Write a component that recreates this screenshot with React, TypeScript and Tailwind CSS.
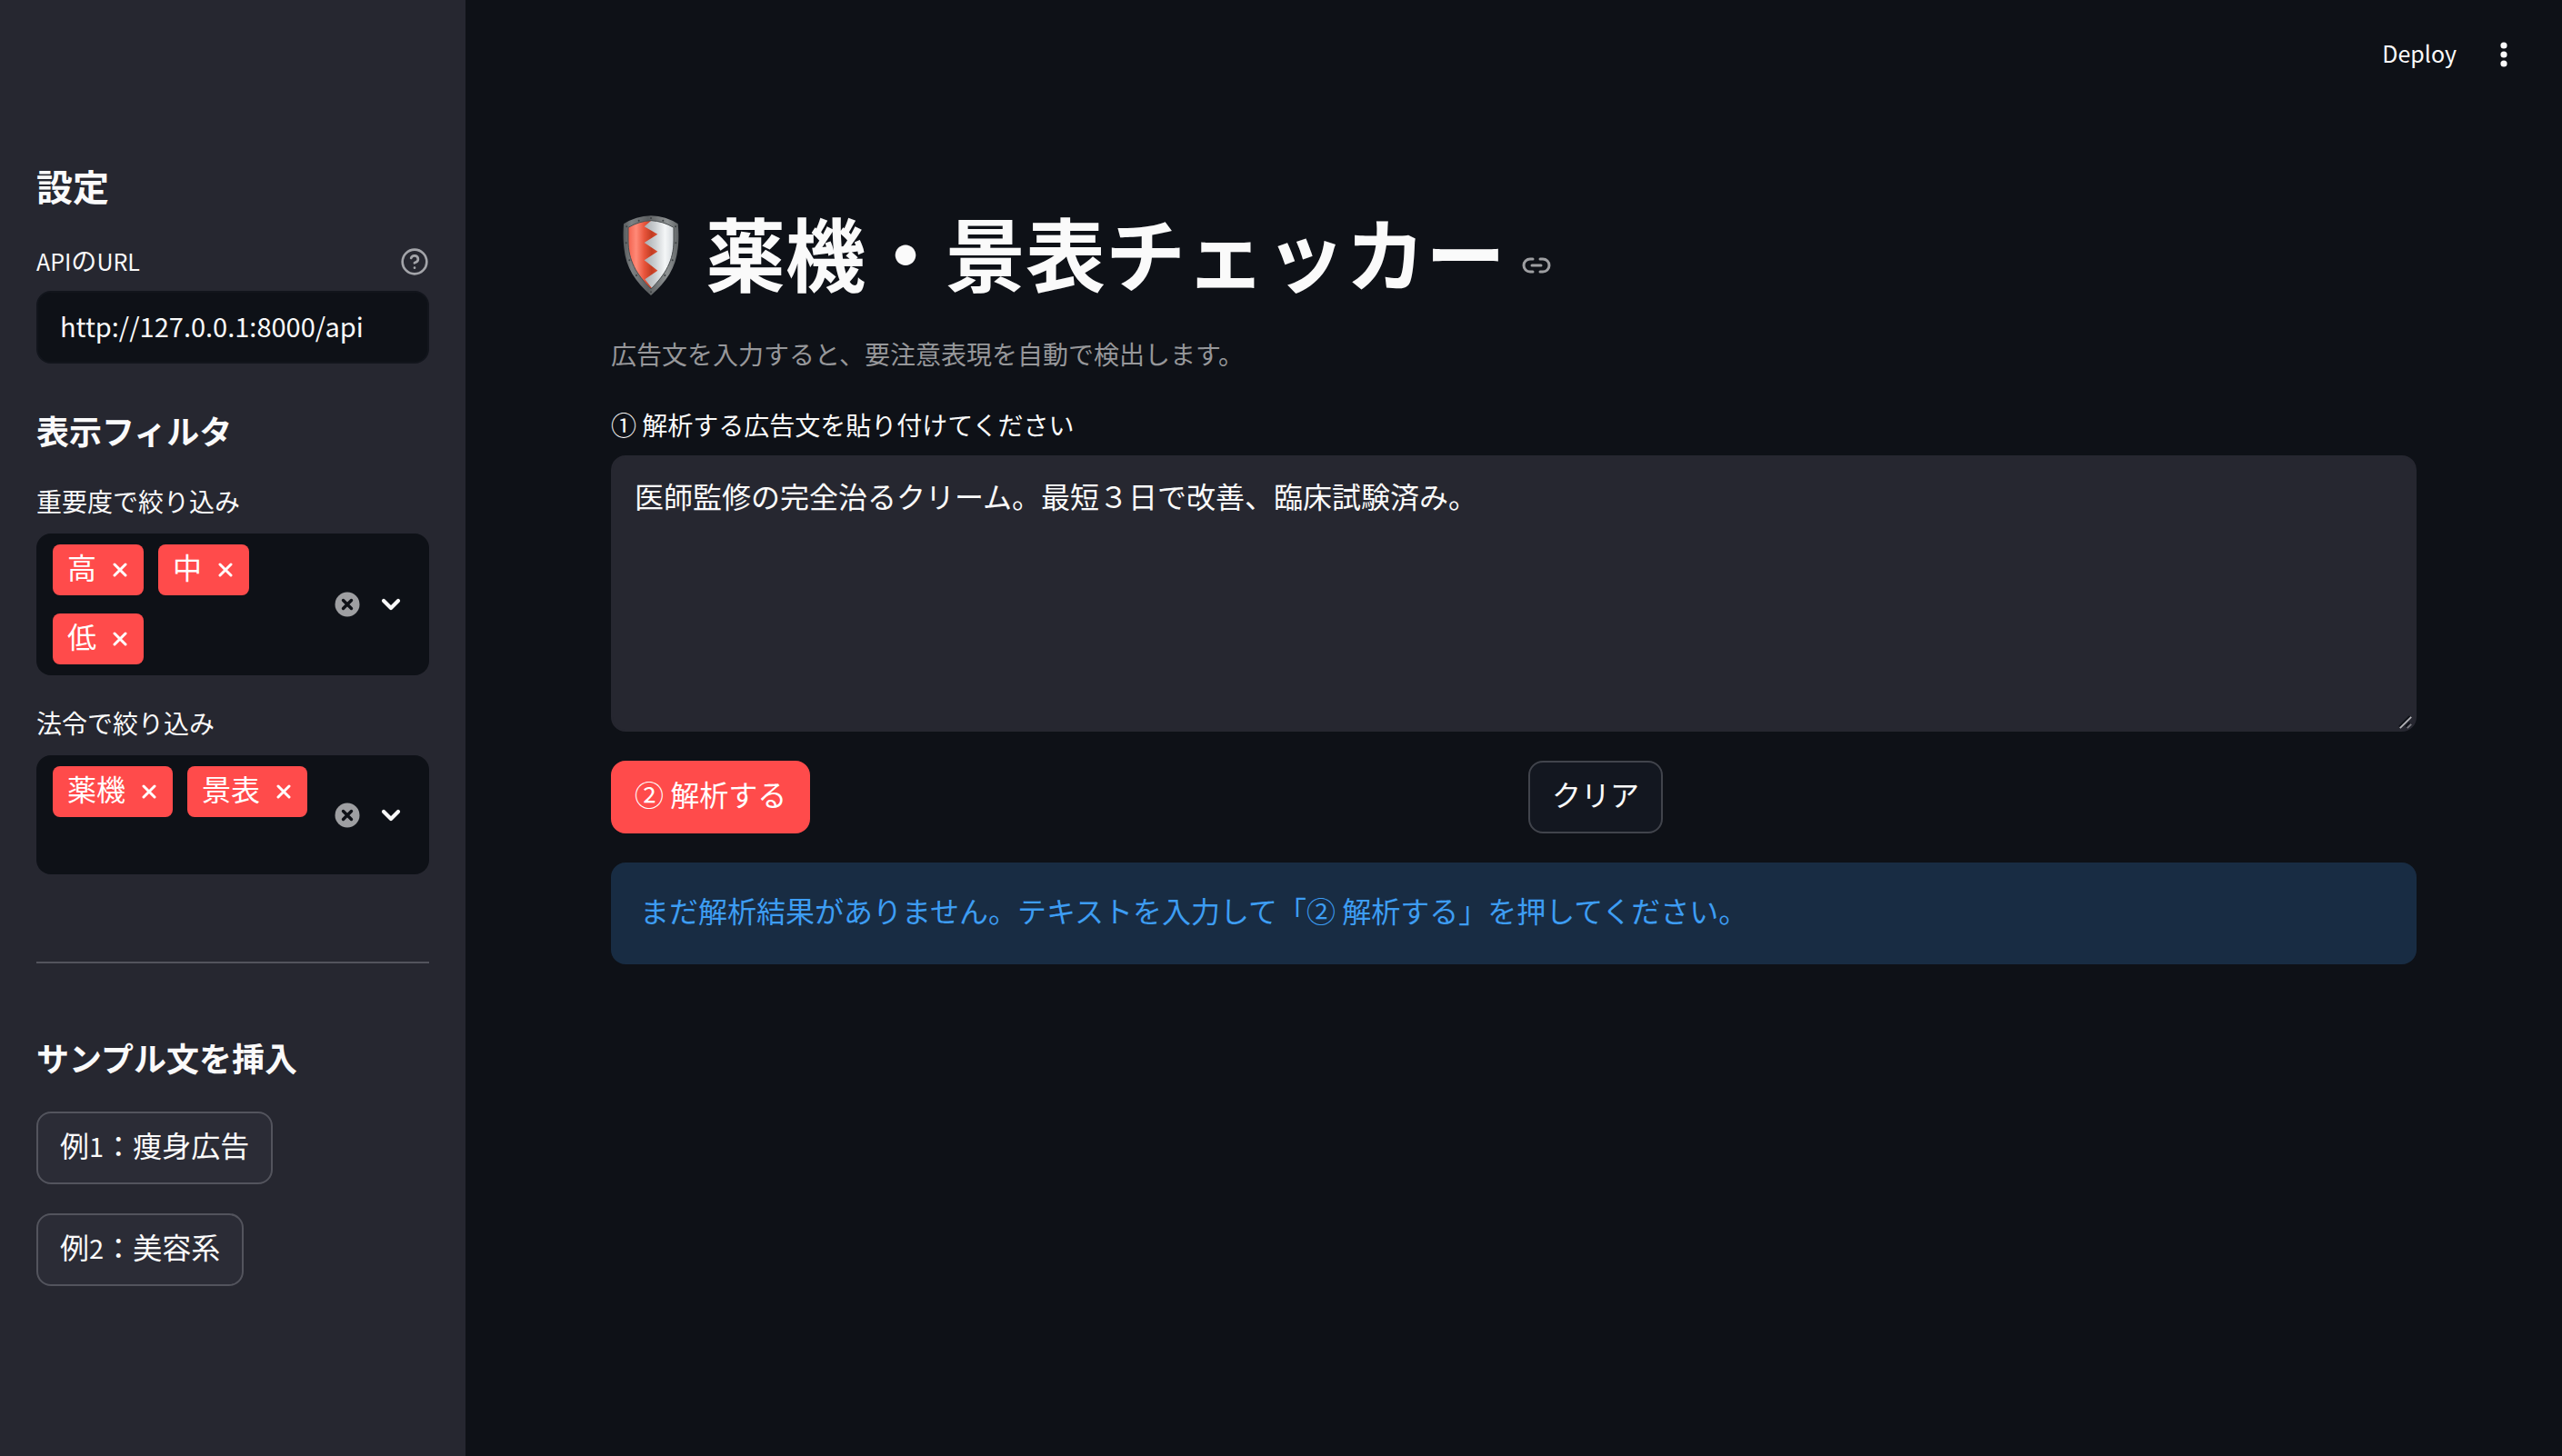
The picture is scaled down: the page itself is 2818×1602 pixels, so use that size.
import { useId, useState, type ReactNode } from "react";

function ShieldIcon() {
  return (
    <svg viewBox="6 36 264 288" className="h-24 w-22 shrink-0" aria-hidden="true">
      <defs>
        <linearGradient id="rim" x1="0" x2="1" y1="0" y2="0">
          <stop offset="0" stopColor="#55595b" />
          <stop offset="0.15" stopColor="#7d8183" />
          <stop offset="0.45" stopColor="#5c5f61" />
          <stop offset="0.8" stopColor="#8e9293" />
          <stop offset="1" stopColor="#5f6365" />
        </linearGradient>
        <linearGradient id="red" gradientUnits="userSpaceOnUse" x1="62" x2="160" y1="0" y2="0">
          <stop offset="0" stopColor="#f2604c" />
          <stop offset="0.28" stopColor="#ff8a78" />
          <stop offset="0.55" stopColor="#e8553c" />
          <stop offset="0.8" stopColor="#c23c22" />
          <stop offset="1" stopColor="#dc4c30" />
        </linearGradient>
        <linearGradient id="silver" gradientUnits="userSpaceOnUse" x1="116" x2="214" y1="0" y2="0">
          <stop offset="0" stopColor="#a9adb1" />
          <stop offset="0.35" stopColor="#c9cdd0" />
          <stop offset="0.7" stopColor="#f4f6f7" />
          <stop offset="1" stopColor="#d3d8dc" />
        </linearGradient>
        <clipPath id="face">
          <path d="M63 91Q98 70 138 68Q178 70 213 91V135C213 200 186 245 138 294C90 245 63 200 63 135Z" />
        </clipPath>
      </defs>
      <path
        d="M48 79Q88 54 138 52Q188 54 227 79C230 110 230 130 227 158C220 225 190 268 138 315C86 268 56 225 49 158C46 130 46 110 48 79Z"
        fill="url(#rim)"
      />
      <g clipPath="url(#face)">
        <path d="M50 50H230V310H50Z" fill="url(#silver)" />
        <path d="M50 50H160L116 88L160 113L116 141L160 170L116 199L160 233L118 262L148 300H50Z" fill="url(#red)" />
      </g>
      <path
        d="M63 91Q98 70 138 68Q178 70 213 91V135C213 200 186 245 138 294C90 245 63 200 63 135Z"
        fill="none"
        stroke="#4a4e50"
        strokeWidth="3"
      />
      <g fill="#3c4042">
        <circle cx="138" cy="60" r="3" />
        <circle cx="98" cy="68" r="3" />
        <circle cx="178" cy="68" r="3" />
        <circle cx="58" cy="88" r="3" />
        <circle cx="219" cy="88" r="3" />
        <circle cx="56" cy="142" r="3" />
        <circle cx="220" cy="142" r="3" />
        <circle cx="67" cy="199" r="3" />
        <circle cx="209" cy="199" r="3" />
        <circle cx="90" cy="249" r="3" />
        <circle cx="184" cy="249" r="3" />
        <circle cx="138" cy="304" r="3" />
      </g>
    </svg>
  );
}

function HelpIcon() {
  return (
    <svg
      viewBox="0 0 24 24"
      className="size-8"
      fill="none"
      stroke="currentColor"
      strokeWidth="2"
      strokeLinecap="round"
      strokeLinejoin="round"
      aria-hidden="true"
    >
      <circle cx="12" cy="12" r="10" />
      <path d="M9.09 9a3 3 0 0 1 5.83 1c0 2-3 3-3 3" />
      <path d="M12 17h.01" />
    </svg>
  );
}

function LinkIcon() {
  return (
    <svg
      viewBox="0 0 32 18"
      className="h-[18px] w-8"
      fill="none"
      stroke="currentColor"
      strokeWidth="3"
      strokeLinecap="round"
      aria-hidden="true"
    >
      <path d="M12 2H9a7 7 0 0 0 0 14h3M20 2h3a7 7 0 0 1 0 14h-3M11 9h10" />
    </svg>
  );
}

function Heading({ children, large = false }: { children: ReactNode; large?: boolean }) {
  return (
    <h2 className={large ? "text-[40px] leading-[48px] font-bold" : "text-4xl leading-11 font-bold"}>
      {children}
    </h2>
  );
}

function MultiSelect({ label, initial, minHeight }: { label: string; initial: string[]; minHeight: string }) {
  const [items, setItems] = useState(initial);
  const id = useId();
  return (
    <div role="group" aria-labelledby={id}>
      <div id={id} className="mb-2 flex h-12 items-center pb-2 text-[28px] leading-10">
        {label}
      </div>
      <div className={`flex items-center rounded-2xl bg-[#0e1117] py-3 pr-6 pl-[18px] ${minHeight}`}>
        <div className="flex flex-1 flex-wrap content-start gap-x-4 gap-y-5 self-stretch">
          {items.map((item) => (
            <span
              key={item}
              className="flex h-14 items-center rounded-lg bg-[#ff4b4b] pl-4 text-[32px] leading-10 text-white"
            >
              <span className="pb-2">{item}</span>
              <button
                type="button"
                aria-label={`${item}を削除`}
                className="flex h-14 w-13 items-center justify-center"
                onClick={() => setItems(items.filter((other) => other !== item))}
              >
                <svg viewBox="0 0 16 16" className="size-4" stroke="currentColor" strokeWidth="3" strokeLinecap="round">
                  <path d="M2 2l12 12M14 2L2 14" />
                </svg>
              </button>
            </span>
          ))}
        </div>
        <button type="button" aria-label="すべて解除" className="flex size-9 items-center justify-center" onClick={() => setItems([])}>
          <svg viewBox="0 0 28 28" className="size-7">
            <circle cx="14" cy="14" r="13.5" fill="#9e9fa2" />
            <path d="M9.5 9.5l9 9M18.5 9.5l-9 9" stroke="#0e1117" strokeWidth="3.4" strokeLinecap="round" />
          </svg>
        </button>
        <button type="button" aria-label="開く" className="ml-3 flex size-9 items-center justify-center">
          <svg
            viewBox="0 0 22 16"
            className="h-4 w-[22px]"
            fill="none"
            stroke="#fafafa"
            strokeWidth="4.2"
            strokeLinecap="round"
            strokeLinejoin="round"
          >
            <path d="M3 4l8 8l8-8" />
          </svg>
        </button>
      </div>
    </div>
  );
}

function Button({ children, onClick, tone }: { children: ReactNode; onClick: () => void; tone: "primary" | "main" | "side" }) {
  const tones = {
    primary: "border-[#ff4b4b] bg-[#ff4b4b] text-white",
    main: "border-[#41444c] bg-[#131720]",
    side: "border-[#53545d] bg-[#2b2c36]",
  };
  return (
    <button
      type="button"
      onClick={onClick}
      className={`flex h-20 items-center justify-self-start rounded-2xl border-2 px-6 pb-2 text-[32px] leading-10 ${tones[tone]}`}
    >
      {children}
    </button>
  );
}

export default function App() {
  const [url, setUrl] = useState("http://127.0.0.1:8000/api");
  const [text, setText] = useState("医師監修の完全治るクリーム。最短３日で改善、臨床試験済み。");

  return (
    <div
      lang="ja"
      className="flex min-h-screen bg-[#0e1117] font-['Noto_Sans_CJK_JP',sans-serif] text-[#fafafa]"
    >
      <aside className="w-[512px] shrink-0 bg-[#262730] px-10 pt-[180px] pb-24">
        <Heading large>設定</Heading>
        <div className="mt-9">
          <div className="mb-2 flex h-12 items-center justify-between">
            <label htmlFor="api-url" className="pb-1 text-[25px] leading-10">
              API<span className="text-[28px]">の</span>URL
            </label>
            <button type="button" aria-label="ヘルプ" className="text-[#a3a4a9]">
              <HelpIcon />
            </button>
          </div>
          <input
            id="api-url"
            type="text"
            value={url}
            onChange={(e) => setUrl(e.target.value)}
            className="h-20 w-full rounded-2xl border-2 border-[#12151c] bg-[#0e1117] px-6 pb-1 text-[29px] outline-none"
          />
        </div>

        <div className="mt-[51px] mb-9">
          <Heading>表示フィルタ</Heading>
        </div>
        <div className="flex flex-col gap-8">
          <MultiSelect label="重要度で絞り込み" initial={["高", "中", "低"]} minHeight="min-h-[156px]" />
          <MultiSelect label="法令で絞り込み" initial={["薬機", "景表"]} minHeight="min-h-[131px]" />
        </div>

        <hr className="mt-24 mb-[81px] border-t-2 border-[#53545d]" />

        <Heading>サンプル文を挿入</Heading>
        <div className="mt-[38px] flex flex-col items-start gap-8">
          <Button tone="side" onClick={() => setText("飲むだけで必ず痩せるサプリ。")}>
            <span>
              例<span className="text-[29px]">1</span>：痩身広告
            </span>
          </Button>
          <Button tone="side" onClick={() => setText("シミが完全に消える美容液。")}>
            <span>
              例<span className="text-[29px]">2</span>：美容系
            </span>
          </Button>
        </div>
      </aside>

      <div className="flex min-w-0 flex-1 flex-col">
        <header className="flex h-[120px] items-center justify-end pr-12">
          <button type="button" className="px-4 pb-1 text-[25px] leading-10">
            Deploy
          </button>
          <button type="button" aria-label="メニュー" className="ml-5 flex size-8 items-center justify-center">
            <svg viewBox="0 0 8 28" className="h-7 w-2" fill="#fafafa">
              <circle cx="4" cy="4" r="3.6" />
              <circle cx="4" cy="14" r="3.6" />
              <circle cx="4" cy="24" r="3.6" />
            </svg>
          </button>
        </header>

        <main className="px-40 pt-[103px]">
          <h1 className="flex items-center text-[88px] leading-[106px] font-bold">
            <ShieldIcon />
            <span className="ml-4 pb-2">薬機・景表チェッカー</span>
            <a href="#checker" aria-label="見出しへのリンク" className="mt-6 ml-[18px] text-[#9e9fa2]">
              <LinkIcon />
            </a>
          </h1>
          <p className="mt-[30px] text-[28px] leading-11 text-[#96979a]">
            広告文を入力すると、要注意表現を自動で検出します。
          </p>

          <label htmlFor="ad-text" className="mt-[34px] mb-2 flex h-12 items-center pb-1 text-[28px] leading-10">
            ① 解析する広告文を貼り付けてください
          </label>
          <div className="relative">
            <textarea
              id="ad-text"
              value={text}
              onChange={(e) => setText(e.target.value)}
              className="block h-[304px] w-full resize-none rounded-2xl border-2 border-[#262730] bg-[#262730] px-6 py-5 text-[32px] leading-11 outline-none"
            />
            <svg viewBox="0 0 18 18" className="absolute right-1 bottom-0.5 size-4" fill="none" strokeWidth="2">
              <path d="M1 14L14 1M9 14l5-5" stroke="#0e1117" />
              <path d="M2 16L16 2" stroke="#b4b4b8" />
              <path d="M11 16l5-5" stroke="#7a7a80" />
            </svg>
          </div>

          <div className="mt-8 grid grid-cols-2 gap-8">
            <Button tone="primary" onClick={() => undefined}>
              ② 解析する
            </Button>
            <Button tone="main" onClick={() => setText("")}>
              クリア
            </Button>
          </div>

          <div role="status" className="mt-8 rounded-2xl bg-[#182c43] px-8 pt-7 pb-9 text-[32px] leading-12 text-[#3d9df3]">
            まだ解析結果がありません。テキストを入力して「② 解析する」を押してください。
          </div>
        </main>
      </div>
    </div>
  );
}
